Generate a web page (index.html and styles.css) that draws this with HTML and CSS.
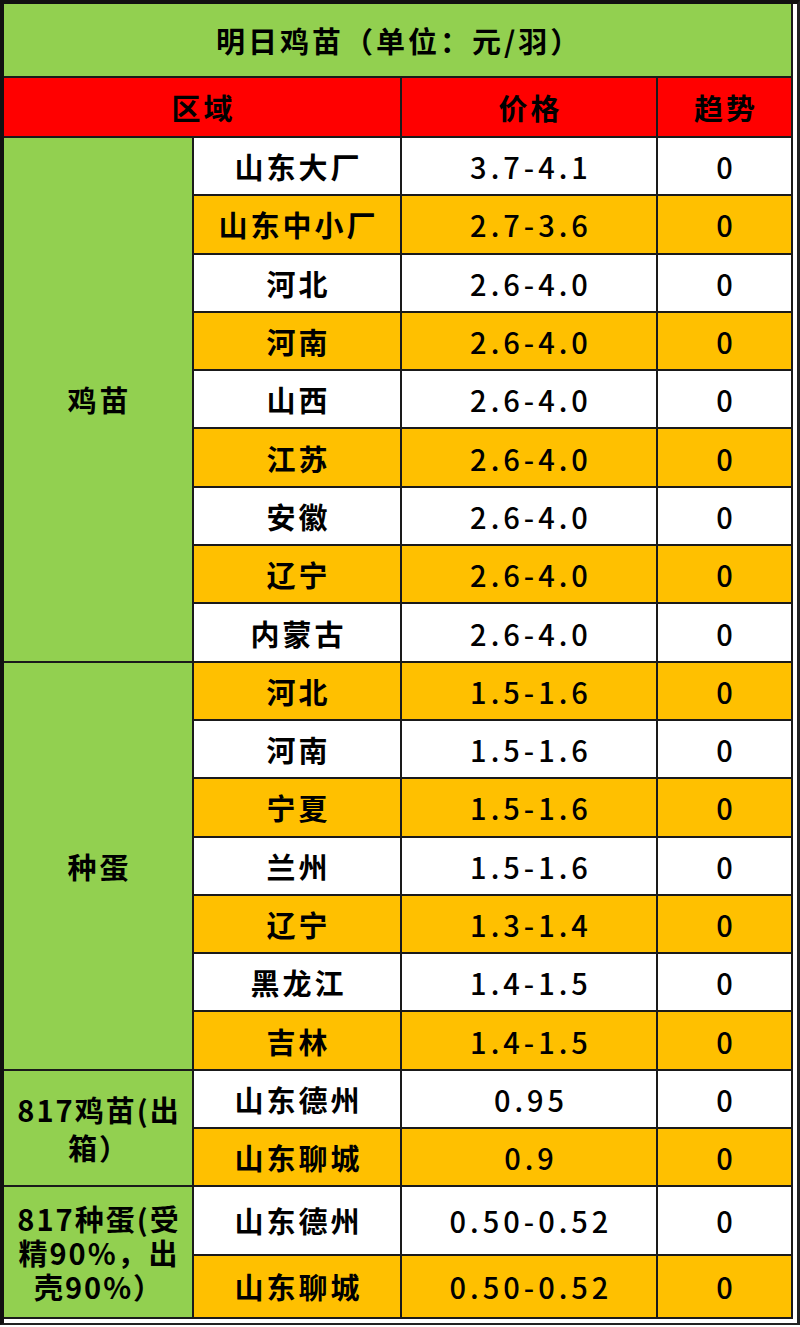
FILE: index.html
```html
<!DOCTYPE html>
<html lang="zh-CN">
<head>
<meta charset="utf-8">
<title>明日鸡苗</title>
<link rel="stylesheet" href="styles.css">
</head>
<body>
<div class="frame">
<table class="sheet">
  <colgroup>
    <col class="c-type">
    <col class="c-area">
    <col class="c-price">
    <col class="c-trend">
  </colgroup>
  <tr class="r-title"><td colspan="4" class="green">明日鸡苗（单位：元/羽）</td></tr>
  <tr class="r-head">
    <td colspan="2" class="red">区域</td>
    <td class="red">价格</td>
    <td class="red">趋势</td>
  </tr>
  <tr class="r-data"><td rowspan="9" class="green">鸡苗</td><td class="white">山东大厂</td><td class="white num">3.7-4.1</td><td class="white num">0</td></tr>
  <tr class="r-data"><td class="yellow">山东中小厂</td><td class="yellow num">2.7-3.6</td><td class="yellow num">0</td></tr>
  <tr class="r-data"><td class="white">河北</td><td class="white num">2.6-4.0</td><td class="white num">0</td></tr>
  <tr class="r-data"><td class="yellow">河南</td><td class="yellow num">2.6-4.0</td><td class="yellow num">0</td></tr>
  <tr class="r-data"><td class="white">山西</td><td class="white num">2.6-4.0</td><td class="white num">0</td></tr>
  <tr class="r-data"><td class="yellow">江苏</td><td class="yellow num">2.6-4.0</td><td class="yellow num">0</td></tr>
  <tr class="r-data"><td class="white">安徽</td><td class="white num">2.6-4.0</td><td class="white num">0</td></tr>
  <tr class="r-data"><td class="yellow">辽宁</td><td class="yellow num">2.6-4.0</td><td class="yellow num">0</td></tr>
  <tr class="r-data"><td class="white">内蒙古</td><td class="white num">2.6-4.0</td><td class="white num">0</td></tr>
  <tr class="r-data"><td rowspan="7" class="green">种蛋</td><td class="yellow">河北</td><td class="yellow num">1.5-1.6</td><td class="yellow num">0</td></tr>
  <tr class="r-data"><td class="white">河南</td><td class="white num">1.5-1.6</td><td class="white num">0</td></tr>
  <tr class="r-data"><td class="yellow">宁夏</td><td class="yellow num">1.5-1.6</td><td class="yellow num">0</td></tr>
  <tr class="r-data"><td class="white">兰州</td><td class="white num">1.5-1.6</td><td class="white num">0</td></tr>
  <tr class="r-data"><td class="yellow">辽宁</td><td class="yellow num">1.3-1.4</td><td class="yellow num">0</td></tr>
  <tr class="r-data"><td class="white">黑龙江</td><td class="white num">1.4-1.5</td><td class="white num">0</td></tr>
  <tr class="r-data"><td class="yellow">吉林</td><td class="yellow num">1.4-1.5</td><td class="yellow num">0</td></tr>
  <tr class="r-817a"><td rowspan="2" class="green multi">817鸡苗(出<br>箱）</td><td class="white">山东德州</td><td class="white num">0.95</td><td class="white num">0</td></tr>
  <tr class="r-817a"><td class="yellow">山东聊城</td><td class="yellow num">0.9</td><td class="yellow num">0</td></tr>
  <tr class="r-817b1"><td rowspan="2" class="green multi tight">817种蛋(受<br>精90%，出<br>壳90%）</td><td class="white">山东德州</td><td class="white num">0.50-0.52</td><td class="white num">0</td></tr>
  <tr class="r-817b2"><td class="yellow">山东聊城</td><td class="yellow num">0.50-0.52</td><td class="yellow num">0</td></tr>
</table>
</div>
</body>
</html>
```

FILE: styles.css
```css
html, body {
  margin: 0;
  padding: 0;
  background: #ffffff;
}

.frame {
  width: 800px;
  box-sizing: border-box;
  border-left: 4px solid #111111;
  border-top: 4px solid #111111;
  border-right: 3px solid #222222;
  border-bottom: 2px solid #222222;
  padding-right: 4px;
  padding-bottom: 4px;
}

.sheet {
  width: 789px;
  border-collapse: separate;
  border-spacing: 0;
  table-layout: fixed;
  font-family: "Noto Sans CJK SC", "Noto Sans", sans-serif;
  font-weight: 700;
  font-size: 29px;
  color: #000000;
}

.c-type { width: 190px; }
.c-area { width: 208px; }
.c-price { width: 256px; }
.c-trend { width: 135px; }

.sheet td {
  padding: 0 0 0 3px;
  text-align: center;
  vertical-align: middle;
  border-right: 2px solid #1a1a1a;
  border-bottom: 2px solid #1a1a1a;
  letter-spacing: 3px;
  line-height: 36px;
  white-space: nowrap;
}

.r-title { height: 74px; }
.r-head { height: 60px; }
.r-data { height: 58.3px; }
.r-817a { height: 58px; }
.r-817b1 { height: 69px; }
.r-817b2 { height: 63px; }

.green { background: #92d050; }
.red { background: #ff0000; }
.yellow { background: #ffc000; }
.white { background: #ffffff; }

.sheet td.num {
  font-weight: 500;
  letter-spacing: 4px;
  padding-left: 4px;
}

.sheet td.multi {
  letter-spacing: 2px;
  line-height: 38px;
  padding-left: 2px;
}

.sheet td.multi.tight {
  line-height: 34px;
}
```
